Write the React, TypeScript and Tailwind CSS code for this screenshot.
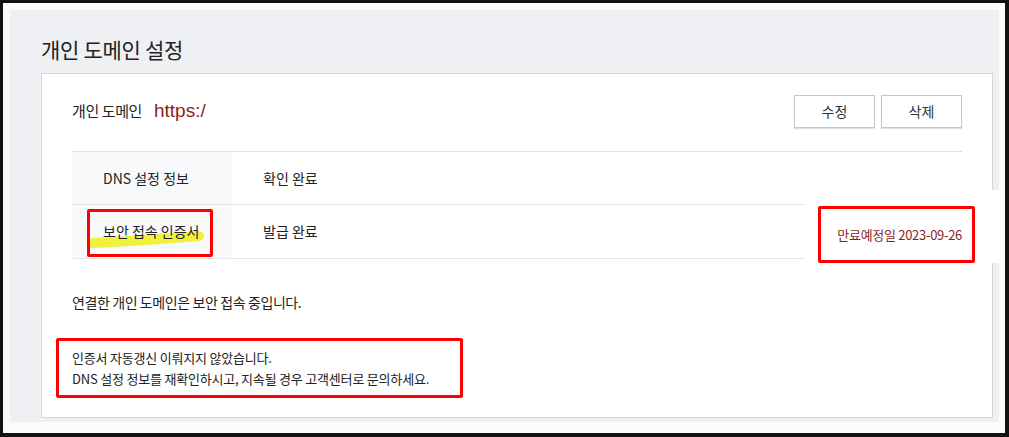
const rows = [
  { label: "DNS 설정 정보", value: "확인 완료", h: "h-[53px]", mark: false },
  { label: "보안 접속 인증서", value: "발급 완료", h: "h-[54px]", mark: true },
];

function Button({ children }: { children: React.ReactNode }) {
  return (
    <button className="h-[33px] w-[81px] border border-[#c4c7cb] bg-white text-[14px] text-[#333] shadow-[0_1px_1px_rgba(0,0,0,0.12)]">
      {children}
    </button>
  );
}

export default function App() {
  return (
    <div className="relative h-[437px] w-[1009px] bg-[#111] pb-[4px] pl-[3px] pr-[4px] pt-[3px] font-['Noto_Sans_CJK_KR','Noto_Sans',sans-serif] text-[#222]">
      <div className="flex h-full flex-col bg-[#fbfbfb] pb-[11px] pl-[7px] pr-[6px] pt-[7px]">
        <div className="flex flex-1 flex-col bg-[#eef0f3] pb-[4px] pl-[31px] pr-[6px]">
          <h1 className="h-[63px] pt-[25px] text-[21px] leading-[28px] tracking-[-0.3px] text-[#222]">
            개인 도메인 설정
          </h1>

          <div className="relative flex-1 border border-[#d3d7dc] bg-white px-[30px] pt-[21px]">
            <div className="flex h-[33px] items-center">
              <span className="text-[15px] tracking-[-0.4px]">개인 도메인</span>
              <span className="ml-[12px] font-['Liberation_Sans',sans-serif] text-[19px] text-[#8c1d1d]">https:/</span>
              <div className="ml-auto flex gap-[6px]">
                <Button>수정</Button>
                <Button>삭제</Button>
              </div>
            </div>

            <div className="mt-[23px] border-t border-[#dcdfe3]">
              {rows.map((row) => (
                <div key={row.label} className={`flex ${row.h} border-b border-[#e3e5e8] text-[14px]`}>
                  <div className="relative flex w-[160px] items-center bg-[#f8f9fa] pl-[31px]">
                    {row.mark && (
                      <svg className="absolute left-[16px] top-[23px]" width="120" height="24" viewBox="0 0 120 24">
                        <path d="M5 15 C 30 14, 70 11, 111 8" stroke="#f0ef1c" strokeWidth="10" strokeLinecap="round" fill="none" opacity="0.85" />
                      </svg>
                    )}
                    <span className="relative z-10">{row.label}</span>
                  </div>
                  <div className="flex items-center pl-[31px]">{row.value}</div>
                </div>
              ))}
            </div>

            <p className="mt-[33px] text-[14px] leading-[20px] tracking-[-0.4px]">연결한 개인 도메인은 보안 접속 중입니다.</p>

            <div className="mt-[35px] text-[13px] leading-[21px] tracking-[-0.2px]">
              <p>인증서 자동갱신 이뤄지지 않았습니다.</p>
              <p>DNS 설정 정보를 재확인하시고, 지속될 경우 고객센터로 문의하세요.</p>
            </div>
          </div>
        </div>
      </div>

      {/* annotations drawn over the screenshot */}
      <div className="absolute left-[87px] top-[209px] h-[48px] w-[126px] rounded-[2px] border-[3px] border-[#f00]" />

      <div className="absolute left-[805px] top-[190px] h-[73px] w-[195px] bg-white">
        <div className="absolute left-[13px] top-[16px] flex h-[57px] w-[157px] items-center justify-end rounded-[2px] border-[3px] border-[#f00] pr-[10px] text-[13px] tracking-[-0.3px] text-[#8a1f1f]">
          만료예정일 2023-09-26
        </div>
      </div>

      <div className="absolute left-[56px] top-[338px] h-[60px] w-[407px] rounded-[2px] border-[3px] border-[#f00]" />
    </div>
  );
}
